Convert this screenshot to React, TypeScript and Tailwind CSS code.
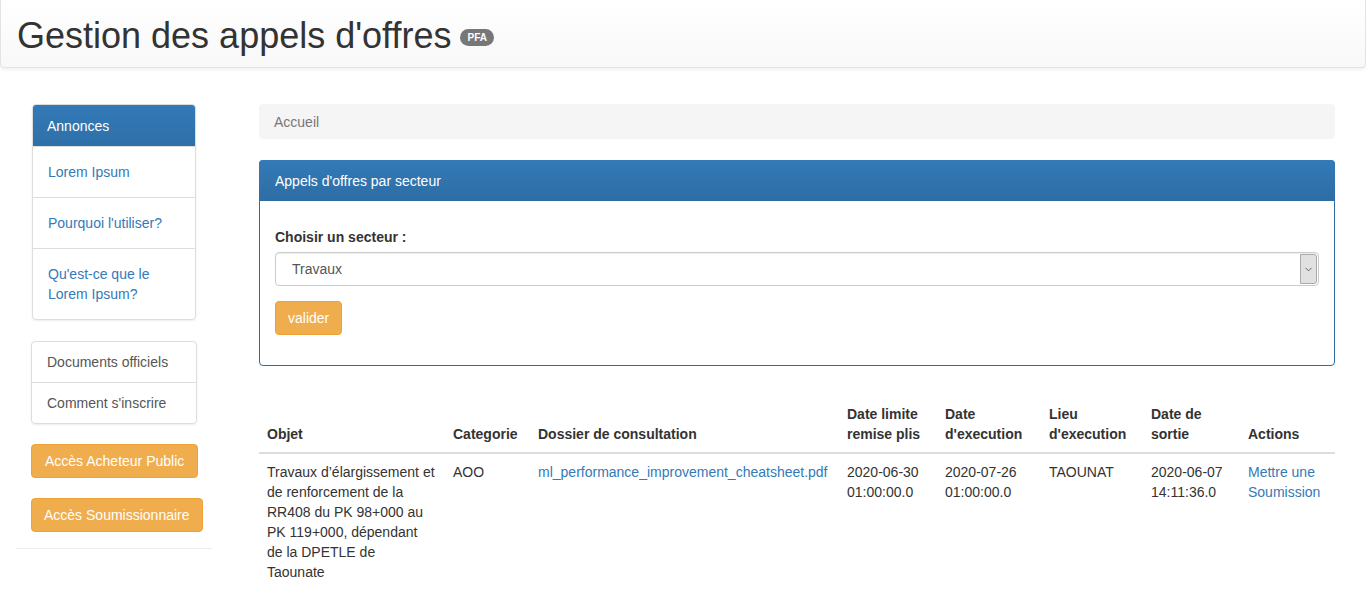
import { ChevronDown } from "lucide-react"

const sideLinks = ["Lorem Ipsum", "Pourquoi l'utiliser?", "Qu'est-ce que le Lorem Ipsum?"]

const columns = [
  { label: "Objet", w: "w-[186px]" },
  { label: "Categorie", w: "w-[85px]" },
  { label: "Dossier de consultation", w: "w-[309px]" },
  { label: "Date limite remise plis", w: "w-[98px]" },
  { label: "Date d'execution", w: "w-[104px]" },
  { label: "Lieu d'execution", w: "w-[102px]" },
  { label: "Date de sortie", w: "w-[97px]" },
  { label: "Actions", w: "w-[95px]" },
]

export default function App() {
  return (
    <div className="min-h-[601px] bg-white font-['Liberation_Sans',Arial,sans-serif] text-[14px] leading-[20px] text-[#333]">
      {/* Header */}
      <header className="h-[68px] rounded-b-[4px] border border-t-0 border-[#e3e3e3] bg-gradient-to-b from-white to-[#f8f8f8] shadow-[0_1px_4px_rgba(0,0,0,0.08)] px-[16px] flex items-center">
        <h1 className="text-[36px] leading-[40px] text-[#333] font-normal flex items-center pt-[4px]">
          Gestion des appels d'offres
          <span className="ml-[9px] mt-[4px] inline-block rounded-[10px] bg-[#777] px-[7px] py-[2px] text-[10px] leading-[13px] font-bold text-white">
            PFA
          </span>
        </h1>
      </header>

      <div className="flex items-start mt-[36px]">
        {/* Sidebar */}
        <aside className="ml-[16px] w-[196px] shrink-0 border-b border-[#eee] pb-[16px]">
          <div className="mx-[16px] rounded-[4px] border border-[#ddd] shadow-[0_1px_2px_rgba(0,0,0,0.075)] overflow-hidden">
            <div className="h-[41px] bg-gradient-to-b from-[#337ab7] to-[#2e6fa8] px-[14px] flex items-center text-white">
              Annonces
            </div>
            {sideLinks.map((l) => (
              <a key={l} className="block border-t border-[#ddd] px-[15px] py-[15px] text-[#337ab7]">
                {l}
              </a>
            ))}
          </div>

          <div className="mx-[15px] mt-[21px] rounded-[4px] border border-[#ddd] shadow-[0_1px_2px_rgba(0,0,0,0.075)]">
            <div className="px-[15px] py-[10px] text-[#555]">Documents officiels</div>
            <div className="border-t border-[#ddd] px-[15px] py-[10px] text-[#555]">Comment s'inscrire</div>
          </div>

          <div className="ml-[15px] mt-[20px] flex flex-col items-start gap-[20px]">
            <button className="h-[34px] rounded-[4px] border border-[#eea236] bg-[#f0ad4e] px-[13px] text-white">
              Accès Acheteur Public
            </button>
            <button className="h-[34px] rounded-[4px] border border-[#eea236] bg-[#f0ad4e] px-[12px] text-white">
              Accès Soumissionnaire
            </button>
          </div>
        </aside>

        {/* Main */}
        <main className="ml-[47px] w-[1076px]">
          <div className="h-[35px] rounded-[4px] bg-[#f5f5f5] px-[15px] flex items-center text-[#777]">Accueil</div>

          <section className="mt-[21px] rounded-[4px] border border-[#2e6da4]">
            <div className="h-[41px] -m-px rounded-t-[4px] bg-gradient-to-b from-[#337ab7] to-[#2e6da4] px-[16px] flex items-center text-white">
              Appels d'offres par secteur
            </div>
            <div className="px-[15px] pt-[27px] pb-[30px]">
              <label className="block font-bold mb-[5px]">Choisir un secteur :</label>
              <div className="flex h-[34px] rounded-[4px] border border-[#ccc] shadow-[inset_0_1px_1px_rgba(0,0,0,0.075)] overflow-hidden">
                <div className="flex-1 flex items-center pl-[16px] text-[#555]">Travaux</div>
                <div className="w-[17px] my-px mr-px rounded-r-[3px] border border-[#aaa] bg-[#e1e1e1] flex items-center justify-center">
                  <ChevronDown className="w-[11px] h-[11px] text-[#444]" strokeWidth={1.75} />
                </div>
              </div>
              <button className="mt-[15px] h-[34px] rounded-[4px] border border-[#eea236] bg-[#f0ad4e] px-[12px] text-white">
                valider
              </button>
            </div>
          </section>

          <table className="mt-[30px] w-full table-fixed border-collapse">
            <thead>
              <tr className="border-b-2 border-[#ddd]">
                {columns.map((c) => (
                  <th key={c.label} className={`${c.w} p-[8px] text-left align-bottom font-bold`}>
                    {c.label}
                  </th>
                ))}
              </tr>
            </thead>
            <tbody>
              <tr className="align-top">
                <td className="py-[8px] pl-[8px] pr-[10px]">
                  Travaux d’élargissement et de renforcement de la RR408 du PK 98+000 au PK 119+000, dépendant de la
                  DPETLE de Taounate
                </td>
                <td className="p-[8px]">AOO</td>
                <td className="p-[8px]">
                  <a className="text-[#337ab7]">ml_performance_improvement_cheatsheet.pdf</a>
                </td>
                <td className="p-[8px]">2020-06-30 01:00:00.0</td>
                <td className="p-[8px]">2020-07-26 01:00:00.0</td>
                <td className="p-[8px]">TAOUNAT</td>
                <td className="p-[8px]">2020-06-07 14:11:36.0</td>
                <td className="p-[8px]">
                  <a className="text-[#337ab7]">Mettre une Soumission</a>
                </td>
              </tr>
            </tbody>
          </table>
        </main>
      </div>
    </div>
  )
}
